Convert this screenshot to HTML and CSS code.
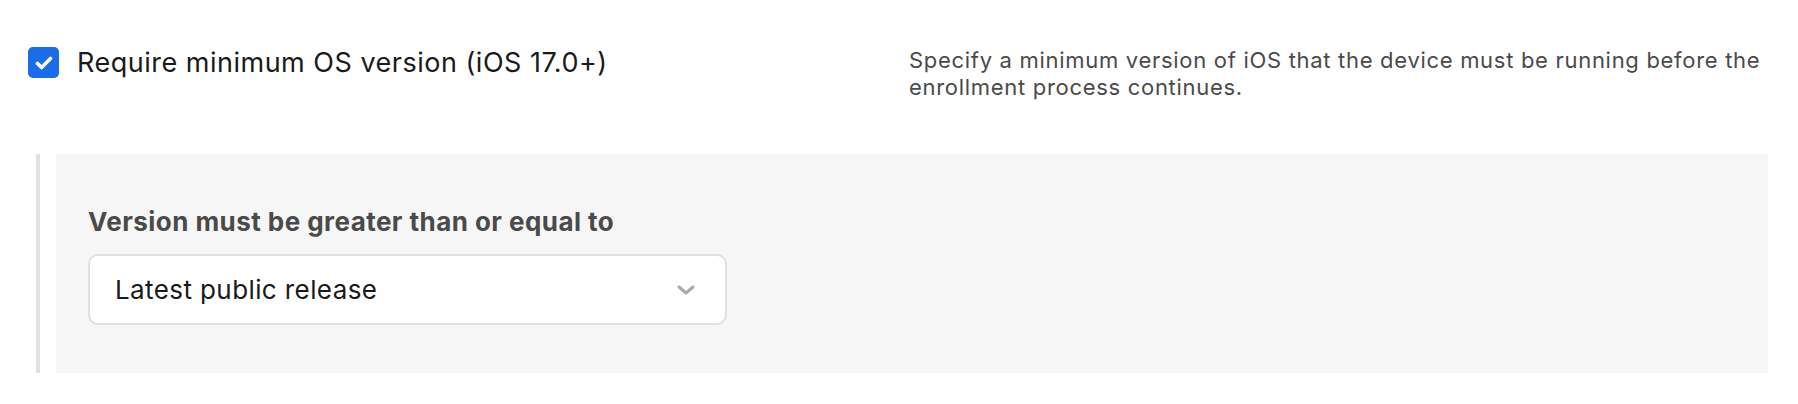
FILE: index.html
```html
<!DOCTYPE html>
<html lang="en">

<head>
  <meta charset="UTF-8">
  <title>Minimum OS version</title>
  <link rel="stylesheet" href="styles.css">
</head>

<body>
  <div class="setting">
    <div class="setting-row">
      <label class="check">
        <span class="check-box">
          <svg xmlns="http://www.w3.org/2000/svg" width="18" height="14" viewBox="0 0 18 14" fill="none">
            <path d="M2.5 7.5L6.5 11.5L15.5 2.5" stroke="#FFFFFF" stroke-width="3.6" stroke-linecap="round"
              stroke-linejoin="round" />
          </svg>
        </span>
        <span class="check-text">Require minimum OS version (iOS 17.0+)</span>
      </label>
      <p class="setting-help">
        Specify a minimum version of iOS that the device must be running before the enrollment process continues.
      </p>
    </div>

    <div class="sub-setting">
      <div class="sub-panel">
        <div class="field-label">Version must be greater than or equal to</div>
        <button class="select-toggle">
          <span class="text">Latest public release</span>
          <span class="caret">
            <svg xmlns="http://www.w3.org/2000/svg" width="18" height="10" viewBox="0 0 18 10" fill="none">
              <path d="M2 2L9 8L16 2" stroke="#AAAAAA" stroke-width="3" stroke-linecap="round"
                stroke-linejoin="round" />
            </svg>
          </span>
        </button>
      </div>
    </div>
  </div>
</body>

</html>
```

FILE: styles.css
```css
body {
  margin: 0;
  background: #FFFFFF;
  font-family: Inter, "Liberation Sans", sans-serif;
}

.setting {
  padding: 47px 30px 0 28px;
}

.setting-row {
  display: grid;
  grid-template-columns: 1fr 1fr;
  gap: 22px;
}

.check {
  display: flex;
  align-items: flex-start;
  gap: 18px;
  cursor: pointer;
}

.check-box {
  flex: none;
  display: flex;
  align-items: center;
  justify-content: center;
  width: 31px;
  height: 31px;
  border-radius: 5px;
  background: #1A6CE9;
}

.check-text {
  color: #1A1A1A;
  font-size: 27px;
  letter-spacing: 0.5px;
  line-height: 32px;
}

.setting-help {
  margin: 0;
  color: #4A4A4A;
  font-size: 22px;
  letter-spacing: 0.7px;
  line-height: 27px;
}

.sub-setting {
  margin: 53px 0 30px 8px;
  padding-left: 16px;
  border-left: 4px solid #E1E1E1;
}

.sub-panel {
  background: #F6F6F6;
  padding: 52px 32px 48px;
}

.field-label {
  margin-bottom: 16px;
  color: #4A4A4A;
  font-size: 26px;
  font-weight: 700;
  letter-spacing: 0.45px;
  line-height: 32px;
}

.select-toggle {
  display: flex;
  align-items: center;
  justify-content: space-between;
  width: 639px;
  height: 71px;
  padding: 0 30px 0 25px;
  background: #FFFFFF;
  border: 2px solid #E0E0E0;
  border-radius: 10px;
  font-family: inherit;
  cursor: pointer;
}

.select-toggle .text {
  color: #1A1A1A;
  font-size: 26px;
  letter-spacing: 0.4px;
  line-height: 32px;
}

.select-toggle .caret {
  display: flex;
}
```
